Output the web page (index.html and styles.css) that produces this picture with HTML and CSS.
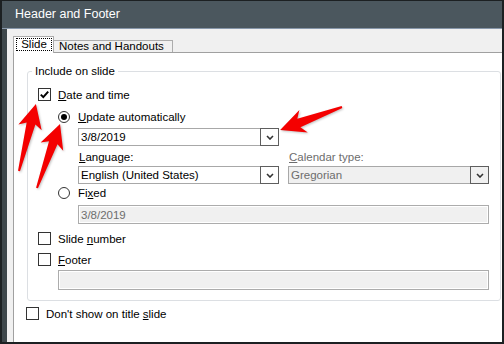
FILE: index.html
```html
<!DOCTYPE html>
<html lang="en">
<head>
    <meta charset="UTF-8">
    <title>Header and Footer</title>
    <link rel="stylesheet" href="styles.css">
</head>
<body>

<div class="shot">
    <div class="titlebar">Header and Footer</div>
    <div class="client">
        <div class="tabs">
            <div class="tab active"><span class="focus">Slide</span></div>
            <div class="tab">Notes and Handouts</div>
        </div>
        <div class="panel">
            <div class="group">
                <span class="legend">Include on slide</span>

                <div class="row check-row date-row">
                    <span class="checkbox">
                        <svg width="11" height="11" viewBox="0 0 11 11"><path d="M1.8 5.6 L4.3 8.1 L9.2 2.6" fill="none" stroke="#000" stroke-width="2"/></svg>
                    </span>
                    <span><u>D</u>ate and time</span>
                </div>

                <div class="row radio-row update-row">
                    <span class="radio on"></span>
                    <span><u>U</u>pdate automatically</span>
                </div>

                <div class="combo first">
                    <span class="value">3/8/2019</span>
                    <span class="drop"><svg width="8" height="5" viewBox="0 0 8 5"><polyline points="1,1 4,4 7,1" fill="none" stroke="#333" stroke-width="1.6"/></svg></span>
                </div>

                <div class="pair labels">
                    <span><u>L</u>anguage:</span>
                    <span class="disabled"><u>C</u>alendar type:</span>
                </div>

                <div class="pair combos">
                    <div class="combo">
                        <span class="value">English (United States)</span>
                        <span class="drop"><svg width="8" height="5" viewBox="0 0 8 5"><polyline points="1,1 4,4 7,1" fill="none" stroke="#333" stroke-width="1.6"/></svg></span>
                    </div>
                    <div class="combo off">
                        <span class="value">Gregorian</span>
                        <span class="drop"><svg width="8" height="5" viewBox="0 0 8 5"><polyline points="1,1 4,4 7,1" fill="none" stroke="#333" stroke-width="1.6"/></svg></span>
                    </div>
                </div>

                <div class="row radio-row fixed-row">
                    <span class="radio"></span>
                    <span>Fi<u>x</u>ed</span>
                </div>

                <div class="field fixed-field">3/8/2019</div>

                <div class="row check-row number-row">
                    <span class="checkbox"></span>
                    <span>Slide <u>n</u>umber</span>
                </div>

                <div class="row check-row footer-row">
                    <span class="checkbox"></span>
                    <span><u>F</u>ooter</span>
                </div>

                <div class="field footer-field"></div>
            </div>

            <div class="row check-row title-row">
                <span class="checkbox"></span>
                <span>Don't show on title <u>s</u>lide</span>
            </div>
        </div>
    </div>

    <!-- red callout arrows drawn over the dialog -->
    <svg class="arrows" width="504" height="344" viewBox="0 0 504 344">
        <polygon transform="translate(19 171) rotate(-75.8)" points="0,-1 49,-4.5 45,-12 69,0 45,12 49,4.5 0,1"/>
        <polygon transform="translate(37 188) rotate(-70.2)" points="0,-1 48,-4.5 44,-12 68,0 44,12 48,4.5 0,1"/>
        <polygon transform="translate(342 107) rotate(159.6)" points="0,-1 46,-4.5 41,-12 66,0 41,12 46,4.5 0,1"/>
    </svg>
</div>

</body>
</html>
```

FILE: styles.css
```css
body {
    margin: 0;
    font-family: "Liberation Sans", Arial, sans-serif;
    font-size: 11.5px;
    color: #000;
}
u {
    text-underline-offset: 1px;
}
.shot {
    position: relative;
    width: 504px;
    height: 344px;
    box-sizing: border-box;
    border: 2px solid #1c2022;
    border-top-width: 1px;
    background: #3e474b;
    display: flex;
    flex-direction: column;
    overflow: hidden;
}
.titlebar {
    flex: none;
    height: 27px;
    line-height: 27px;
    padding-left: 13px;
    background: #4b575e;
    color: #fff;
    font-size: 12.5px;
    border-bottom: 1px solid #8797aa;
}
.client {
    flex: 1;
    min-height: 0;
    margin-left: 5px;
    padding: 7px 0 0 6px;
    background: #f0f0f0;
    display: flex;
    flex-direction: column;
}

/* tabs */
.tabs {
    display: flex;
    align-items: flex-end;
    height: 16px;
}
.tab {
    width: 108px;
    height: 11px;
    line-height: 11px;
    padding: 0 5px;
    margin-left: -1px;
    border: 1px solid #acacac;
    border-bottom: none;
    background: #f0f0f0;
    white-space: nowrap;
}
.tab.active {
    position: relative;
    z-index: 1;
    width: 39px;
    height: 16px;
    padding: 0;
    margin: 0 0 -1px 0;
    background: #fff;
}
.focus {
    display: block;
    width: 34px;
    height: 11px;
    line-height: 11px;
    margin: 1px 0 0 2px;
    border: 1px dotted #000;
    text-align: center;
}
.panel {
    flex: 1;
    background: #fff;
    border-top: 1px solid #a0a0a0;
    border-left: 1px solid #a0a0a0;
}

/* group box */
.group {
    width: 474px;
    box-sizing: border-box;
    margin: 18px 0 0 13px;
    padding: 0 10px 10px 10px;
    border: 1px solid #dcdfe3;
    border-radius: 3px;
    display: flex;
    flex-direction: column;
    align-items: flex-start;
}
.legend {
    height: 15px;
    line-height: 15px;
    margin: -8px 0 0 -6px;
    padding: 0 3px;
    background: #fff;
}

/* checkbox and radio rows */
.row {
    display: flex;
    align-items: center;
    white-space: nowrap;
}
.check-row {
    height: 13px;
    gap: 7px;
}
.radio-row {
    height: 12px;
    gap: 8px;
    margin-left: 20px;
}
.date-row { margin-top: 9px; }
.update-row { margin-top: 10px; }
.fixed-row { margin-top: 3px; }
.number-row { margin-top: 8px; }
.footer-row { margin-top: 8px; }
.title-row { margin: 6px 0 0 12px; }

.checkbox {
    width: 11px;
    height: 11px;
    border: 1px solid #333;
    background: #fff;
    display: flex;
}
.radio {
    width: 10px;
    height: 10px;
    border: 1px solid #333;
    border-radius: 50%;
    background: #fff;
    display: grid;
    place-items: center;
}
.radio.on::after {
    content: "";
    width: 6px;
    height: 6px;
    border-radius: 50%;
    background: #000;
}

/* combo boxes and text fields */
.combo {
    width: 201px;
    height: 18px;
    box-sizing: border-box;
    border: 1px solid #a8a8a8;
    padding-left: 2px;
    background: #fff;
    display: flex;
    align-items: center;
}
.combo .value {
    flex: 1;
    white-space: nowrap;
}
.drop {
    width: 19px;
    height: 18px;
    box-sizing: border-box;
    margin: -1px -1px -1px 0;
    border: 1px solid #5e5e5e;
    background: #fff;
    display: grid;
    place-items: center;
}
.combo.off,
.combo.off .drop {
    background: #f0f0f0;
}
.combo.off {
    color: #6d6d6d;
}
.combo.first {
    margin: 5px 0 0 40px;
}
.pair {
    display: grid;
    grid-template-columns: 201px 201px;
    column-gap: 9px;
    margin-left: 40px;
}
.labels {
    margin-top: 5px;
    height: 13px;
    line-height: 13px;
}
.labels span {
    padding-left: 1px;
}
.combos {
    margin-top: 2px;
}
.disabled {
    color: #6d6d6d;
}
.field {
    height: 19px;
    box-sizing: border-box;
    border: 1px solid #acacac;
    padding-left: 2px;
    background: #f0f0f0;
    box-shadow: inset 0 0 0 1px #fff;
    color: #6d6d6d;
    display: flex;
    align-items: center;
}
.fixed-field {
    width: 411px;
    margin: 6px 0 0 40px;
}
.footer-field {
    width: 431px;
    height: 20px;
    margin: 4px 0 0 20px;
}

.arrows {
    position: absolute;
    left: -2px;
    top: -1px;
    pointer-events: none;
    fill: #f40000;
    filter: drop-shadow(1px 1px 1px rgba(0, 0, 0, 0.25));
}
```
